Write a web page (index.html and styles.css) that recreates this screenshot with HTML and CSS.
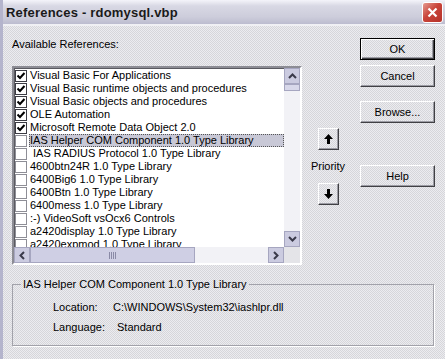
FILE: index.html
```html
<!DOCTYPE html>
<html lang="en">
<head>
    <meta charset="UTF-8">
    <title>References - rdomysql.vbp</title>
    <link rel="stylesheet" href="styles.css">
</head>
<body>
<div class="window">
    <!-- Title bar -->
    <div class="titlebar">
        <span class="title">References - rdomysql.vbp</span>
        <span class="close">
            <svg width="11" height="11" viewBox="0 0 11 11"><path d="M1.5 1.5 L9.5 9.5 M9.5 1.5 L1.5 9.5" stroke="#fff" stroke-width="2.2"/></svg>
        </span>
    </div>

    <div class="client">
        <div class="top">
            <!-- Reference list -->
            <div class="refs">
                <div class="label">Available References:</div>
                <div class="listbox">
                    <div class="list-main">
                        <ul class="items">
                            <li><span class="check on"></span><span class="text">Visual Basic For Applications</span></li>
                            <li><span class="check on"></span><span class="text">Visual Basic runtime objects and procedures</span></li>
                            <li><span class="check on"></span><span class="text">Visual Basic objects and procedures</span></li>
                            <li><span class="check on"></span><span class="text">OLE Automation</span></li>
                            <li><span class="check on"></span><span class="text">Microsoft Remote Data Object 2.0</span></li>
                            <li class="selected"><span class="check"></span><span class="text">IAS Helper COM Component 1.0 Type Library</span></li>
                            <li><span class="check"></span><span class="text">&nbsp;IAS RADIUS Protocol 1.0 Type Library</span></li>
                            <li><span class="check"></span><span class="text">4600btn24R 1.0 Type Library</span></li>
                            <li><span class="check"></span><span class="text">6400Big6 1.0 Type Library</span></li>
                            <li><span class="check"></span><span class="text">6400Btn 1.0 Type Library</span></li>
                            <li><span class="check"></span><span class="text">6400mess 1.0 Type Library</span></li>
                            <li><span class="check"></span><span class="text">:-) VideoSoft vsOcx6 Controls</span></li>
                            <li><span class="check"></span><span class="text">a2420display 1.0 Type Library</span></li>
                            <li><span class="check"></span><span class="text">a2420expmod 1.0 Type Library</span></li>
                        </ul>
                        <div class="vscroll">
                            <span class="sb-btn">
                                <svg width="9" height="6" viewBox="0 0 9 6"><path d="M1 5 L4.5 1.5 L8 5" fill="none" stroke="#3a3a4a" stroke-width="2"/></svg>
                            </span>
                            <span class="vthumb"></span>
                            <span class="vtrack"></span>
                            <span class="sb-btn">
                                <svg width="9" height="6" viewBox="0 0 9 6"><path d="M1 1 L4.5 4.5 L8 1" fill="none" stroke="#3a3a4a" stroke-width="2"/></svg>
                            </span>
                        </div>
                    </div>
                    <div class="hscroll">
                        <span class="sb-btn">
                            <svg width="6" height="9" viewBox="0 0 6 9"><path d="M5 1 L1.5 4.5 L5 8" fill="none" stroke="#3a3a4a" stroke-width="2"/></svg>
                        </span>
                        <span class="hthumb"><span class="grip"></span></span>
                        <span class="htrack"></span>
                        <span class="sb-btn">
                            <svg width="6" height="9" viewBox="0 0 6 9"><path d="M1 1 L4.5 4.5 L1 8" fill="none" stroke="#3a3a4a" stroke-width="2"/></svg>
                        </span>
                        <span class="corner"></span>
                    </div>
                </div>
            </div>

            <!-- Priority -->
            <div class="priority">
                <button class="btn arrow">
                    <svg width="9" height="10" viewBox="0 0 9 10"><path d="M4.5 0 L9 5 L6 5 L6 10 L3 10 L3 5 L0 5 Z" fill="#000"/></svg>
                </button>
                <span class="priority-label">Priority</span>
                <button class="btn arrow">
                    <svg width="9" height="10" viewBox="0 0 9 10"><path d="M4.5 10 L9 5 L6 5 L6 0 L3 0 L3 5 L0 5 Z" fill="#000"/></svg>
                </button>
            </div>

            <!-- Buttons -->
            <div class="actions">
                <button class="btn default">OK</button>
                <button class="btn cancel">Cancel</button>
                <button class="btn browse">Browse...</button>
                <button class="btn help">Help</button>
            </div>
        </div>

        <!-- Details -->
        <fieldset class="details">
            <legend>IAS Helper COM Component 1.0 Type Library</legend>
            <div class="row"><span class="key">Location:</span><span>C:\WINDOWS\System32\iashlpr.dll</span></div>
            <div class="row"><span class="key">Language:</span><span class="shift">Standard</span></div>
        </fieldset>
    </div>
</div>
</body>
</html>
```

FILE: styles.css
```css
/* XP silver dialog */
body {
    margin: 0;
    font-family: "Liberation Sans", Arial, sans-serif;
    font-size: 11px;
    color: #000;
    background: #dfdfe3;
}
.window {
    width: 445px;
    height: 359px;
    box-sizing: border-box;
    border-left: 3px solid #b4b4cc;
    background: repeating-conic-gradient(#d6d6da 0% 25%, #ececf0 0% 50%) 0 0 / 2px 2px;
    overflow: hidden;
}
.titlebar {
    height: 24px;
    margin-left: -3px;
    display: flex;
    align-items: center;
    justify-content: space-between;
    padding: 0 2px 0 6px;
    background: linear-gradient(#f4f4fa, #d8d8e4 25%, #cdcddb 70%, #bcbccf);
    border-bottom: 2px solid #f0f0f4;
}
.title {
    font-weight: bold;
    font-size: 13px;
    color: #1a1a1a;
    letter-spacing: 0.2px;
}
.close {
    width: 21px;
    height: 21px;
    box-sizing: border-box;
    border: 1px solid #fff;
    border-radius: 3px;
    background: linear-gradient(135deg, #e59a90, #c9443a 45%, #b5322a);
    display: flex;
    align-items: center;
    justify-content: center;
}
.client {
    padding-top: 12px;
}
.top {
    display: flex;
    padding-left: 9px;
    height: 227px;
}
.refs {
    width: 290px;
}
.label {
    line-height: 13px;
    height: 13px;
    margin-bottom: 15px;
}
/* List box */
.listbox {
    width: 290px;
    height: 199px;
    box-sizing: border-box;
    border: 2px solid;
    border-color: #8c8c94 #fff #fff #8c8c94;
    box-shadow: inset 1px 1px 0 #5a5a60;
    background: #fff;
    display: flex;
    flex-direction: column;
}
.list-main {
    display: flex;
    height: 179px;
}
.items {
    list-style: none;
    margin: 0;
    padding: 1px 0 0 1px;
    width: 269px;
    overflow: hidden;
}
.items li {
    display: flex;
    align-items: center;
    height: 13px;
    white-space: nowrap;
}
.check {
    width: 12px;
    height: 12px;
    box-sizing: border-box;
    border: 1px solid #8e8e96;
    background: #fff;
    margin-right: 2px;
    flex: none;
}
.check.on {
    border-color: #3c3c44;
    background: #fff url("data:image/svg+xml,%3Csvg xmlns='http://www.w3.org/2000/svg' width='10' height='10'%3E%3Cpath d='M1.5 4.5 L4 7 L8.5 2' fill='none' stroke='%23000' stroke-width='2'/%3E%3C/svg%3E") center / 10px 10px no-repeat;
}
.text {
    line-height: 13px;
    padding: 0 1px;
}
.selected .text {
    flex: 1;
    background: #c8c8d6;
    outline: 1px dotted #555;
    outline-offset: -1px;
}
/* Scroll bars */
.vscroll {
    width: 16px;
    display: flex;
    flex-direction: column;
    background: #f2f2f6;
}
.sb-btn {
    width: 16px;
    height: 16px;
    box-sizing: border-box;
    border: 1px solid #a6a6c0;
    background: #cbcbe0;
    display: flex;
    align-items: center;
    justify-content: center;
    flex: none;
}
.vthumb {
    height: 7px;
    box-sizing: border-box;
    border: 1px solid #a6a6c0;
    background: #d8d8ea;
}
.vtrack {
    flex: 1;
}
.hscroll {
    height: 16px;
    display: flex;
    background: #f2f2f6;
}
.hthumb {
    width: 165px;
    box-sizing: border-box;
    border: 1px solid #a6a6c0;
    background: #cfcfe4;
    display: flex;
    align-items: center;
    justify-content: center;
}
.grip {
    width: 8px;
    height: 7px;
    background: repeating-linear-gradient(90deg, #8a8aa6 0 1px, transparent 1px 2px);
}
.htrack {
    flex: 1;
}
.corner {
    width: 16px;
    background: #e4e4e8;
}
/* Priority column */
.priority {
    width: 56px;
    display: flex;
    flex-direction: column;
    align-items: center;
    padding: 90px 4px 0 0;
    box-sizing: border-box;
}
.priority-label {
    line-height: 13px;
    margin: 10px 0;
}
/* Buttons */
.btn {
    font: inherit;
    color: #000;
    padding: 0;
    box-sizing: border-box;
    background: transparent;
    border: 1px solid;
    border-color: #fff #404044 #404044 #fff;
    box-shadow: inset -1px -1px 0 #9c9ca4;
}
.arrow {
    width: 21px;
    height: 22px;
    display: flex;
    align-items: center;
    justify-content: center;
}
.actions {
    width: 75px;
    display: flex;
    flex-direction: column;
    margin-left: 2px;
}
.actions .btn {
    width: 75px;
    height: 22px;
}
.btn.default {
    border: 1px solid #000;
    box-shadow: inset 1px 1px 0 #fff, inset -1px -1px 0 #404044, inset -2px -2px 0 #9c9ca4;
}
.btn.cancel {
    margin-top: 5px;
}
.btn.browse {
    margin-top: 14px;
}
.btn.help {
    margin-top: 42px;
}
/* Details group */
.details {
    margin: 13px 11px 0 9px;
    padding: 0 8px 8px 8px;
    border: 1px solid #a2a2aa;
    box-shadow: 1px 1px 0 #fff;
}
.details legend {
    padding: 0 2px;
    line-height: 13px;
}
.row {
    display: flex;
    height: 20px;
    align-items: center;
    padding-left: 32px;
}
.row:first-of-type {
    margin-top: 6px;
}
.key {
    width: 60px;
}
.shift {
    padding-left: 4px;
}
```
